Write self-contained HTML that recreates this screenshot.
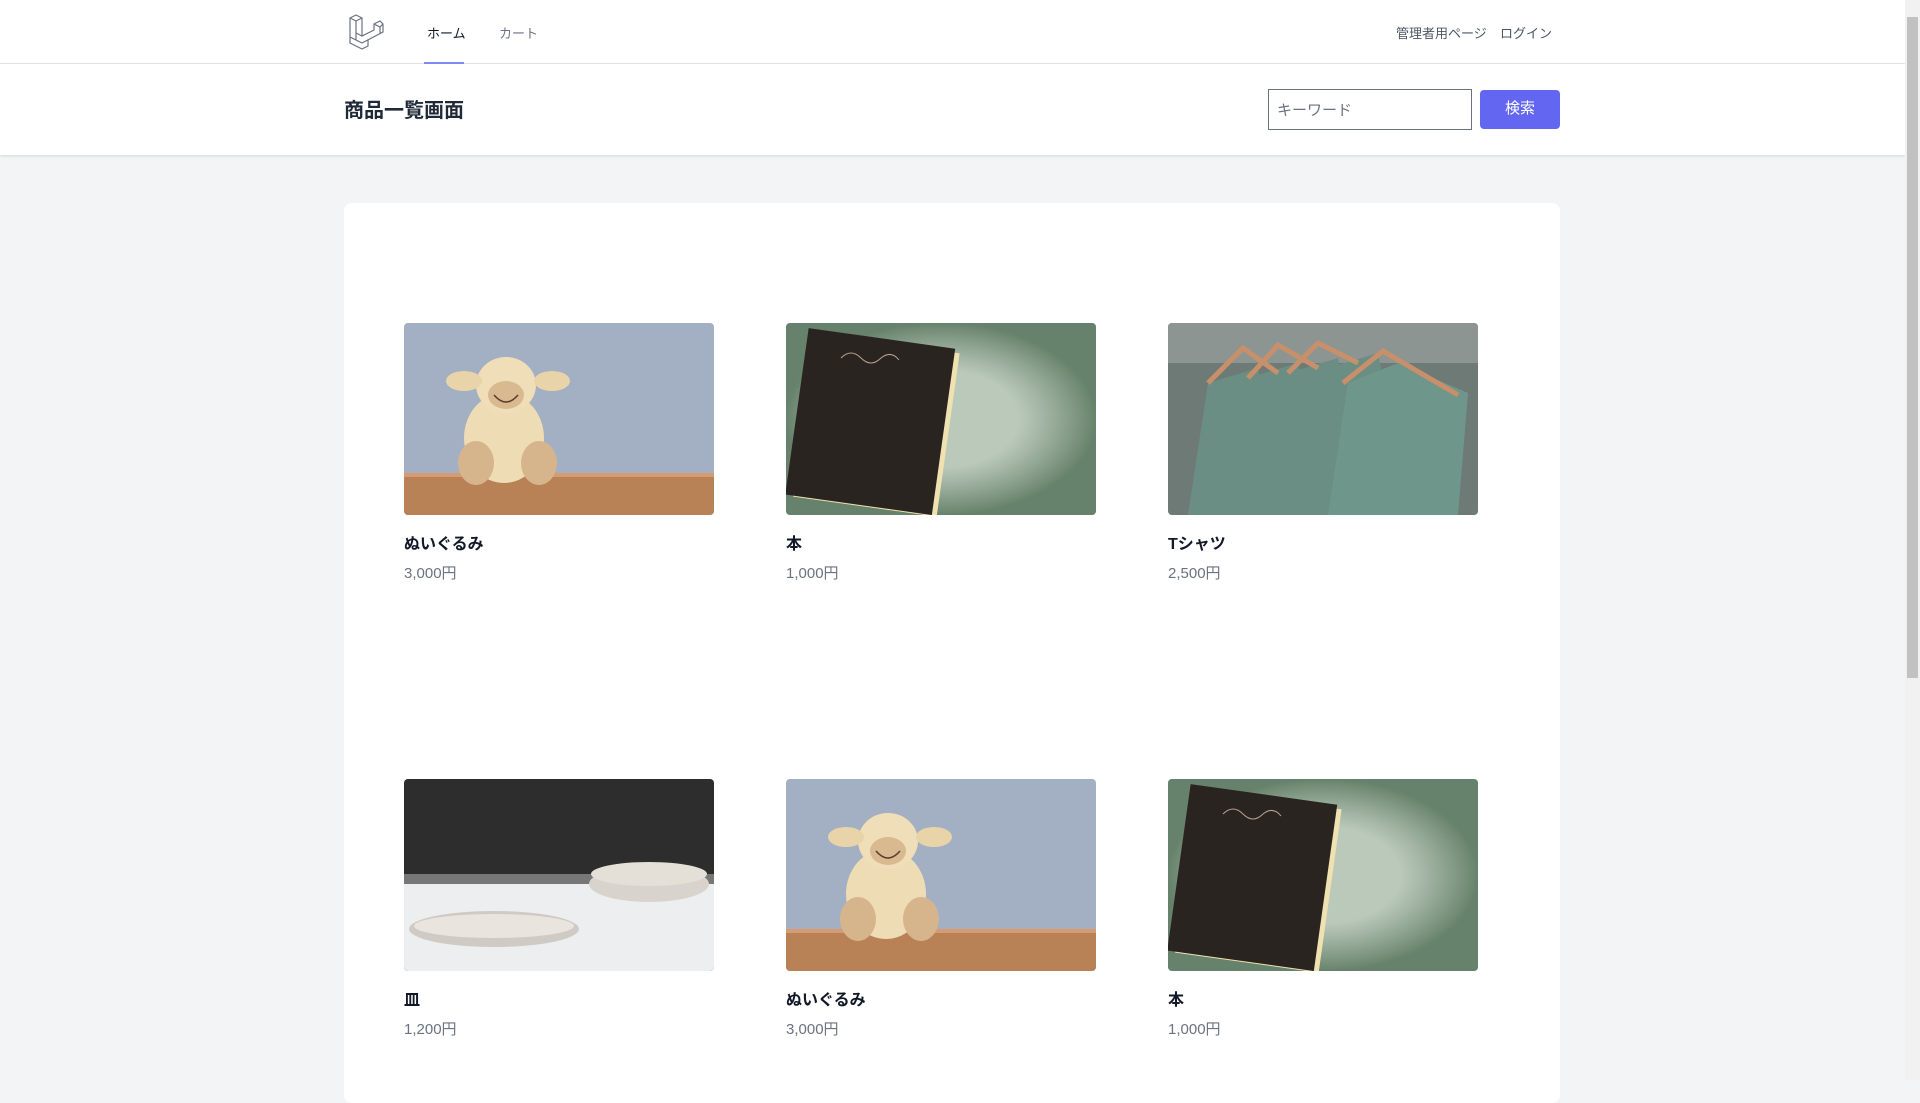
<!DOCTYPE html>
<html><head><meta charset="utf-8"><style>
*{box-sizing:border-box;margin:0;padding:0}
body{width:1920px;height:1080px;overflow:hidden;background:#f3f4f6;font-family:"Liberation Sans","Noto Sans CJK JP",sans-serif;color:#111827;position:relative}
.nav{position:absolute;left:0;top:0;width:1905px;height:64px;background:#fff;border-bottom:1px solid #e5e7eb}
.nav a{position:absolute;top:23px;font-size:13px;color:#6b7280;text-decoration:none}
.hdr{position:absolute;left:0;top:64px;width:1905px;height:91px;background:#fff;box-shadow:0 1px 3px rgba(0,0,0,.12)}
.hdr h2{position:absolute;left:344px;top:30px;font-size:20px;font-weight:600;color:#1f2937}
.inp{position:absolute;left:1268px;top:25px;width:204px;height:41px;border:1px solid #6b7280;font-size:15px;color:#6b7280;padding:9px 8px}
.btn{position:absolute;left:1480px;top:26px;width:80px;height:39px;background:#6366f1;border-radius:4px;color:#fff;font-size:15px;text-align:center;line-height:38px}
.card{position:absolute;left:344px;top:203px;width:1216px;height:900px;background:#fff;border-radius:8px}
.p{position:absolute;width:310px}
.p svg{display:block;width:310px;height:192px;border-radius:4px}
.p .n{margin-top:15px;font-size:16px;font-weight:600;color:#111827}
.p .pr{margin-top:8px;font-size:15px;color:#6b7280}
.sb{position:absolute;left:1905px;top:0;width:15px;height:1080px;background:#f1f1f1}
.sb div{position:absolute;left:2px;top:17px;width:11px;height:661px;background:#c1c1c1}
</style></head><body>
<svg width="0" height="0" style="position:absolute"><defs>
<g id="bear"><rect width="310" height="192" fill="#a3afc2"/><rect y="150" width="310" height="42" fill="#b98156"/><rect y="150" width="310" height="4" fill="#d49c70"/>
<ellipse cx="100" cy="115" rx="40" ry="45" fill="#eedcb4"/><ellipse cx="102" cy="62" rx="30" ry="28" fill="#efdeb8"/><ellipse cx="60" cy="58" rx="18" ry="10" fill="#e8d4a8"/><ellipse cx="148" cy="58" rx="18" ry="10" fill="#e8d4a8"/><ellipse cx="102" cy="72" rx="18" ry="14" fill="#d9b990"/><ellipse cx="72" cy="140" rx="18" ry="22" fill="#d7b58c"/><ellipse cx="135" cy="140" rx="18" ry="22" fill="#d7b58c"/><path d="M90 72 Q102 86 114 72" stroke="#5a3d2b" stroke-width="1.5" fill="none"/></g>
<g id="book"><rect width="310" height="192" fill="#9fb2a0"/><rect width="310" height="192" fill="url(#vg)"/><g transform="rotate(8 80 100)"><rect x="18" y="18" width="145" height="165" fill="#efe2b0"/><rect x="10" y="14" width="148" height="168" fill="#2a2421"/></g><path d="M55 35 q10 -10 20 0 q10 10 20 0 q10 -8 18 2" stroke="#b9a08a" fill="none"/></g>
<radialGradient id="vg"><stop offset=".5" stop-color="#cdd8cc" stop-opacity=".6"/><stop offset="1" stop-color="#4f6e55" stop-opacity=".7"/></radialGradient>
<g id="shirt"><rect width="310" height="192" fill="#6e7a76"/><rect width="310" height="40" fill="#8d9593"/><g fill="#6b8e84"><path d="M40 60 L90 45 L120 192 L20 192Z"/><path d="M80 55 L130 40 L160 192 L60 192Z"/><path d="M120 50 L170 35 L200 192 L100 192Z"/><path d="M160 45 L210 30 L240 192 L140 192Z"/><path d="M180 60 L230 40 L300 70 L290 192 L160 192Z" fill="#6f968b"/></g><g stroke="#c8906a" stroke-width="5" fill="none"><path d="M40 60 L75 25 L110 50"/><path d="M80 55 L110 22 L150 45"/><path d="M120 50 L150 20 L190 40"/><path d="M175 60 L215 28 L290 72"/></g></g>
<g id="plate"><rect width="310" height="192" fill="#2e2d2e"/><rect y="100" width="310" height="92" fill="#eceeef"/><rect y="95" width="310" height="10" fill="#777"/><ellipse cx="90" cy="150" rx="85" ry="18" fill="#cfcac3"/><ellipse cx="90" cy="147" rx="80" ry="12" fill="#e9e5de"/><ellipse cx="245" cy="105" rx="60" ry="18" fill="#d8d4cd"/><ellipse cx="245" cy="95" rx="58" ry="12" fill="#e4e0d8"/></g>
</defs></svg>
<div class="nav">
<svg style="position:absolute;left:348px;top:12px" width="36" height="38" viewBox="0 0 36 38" fill="none" stroke="#6b7280" stroke-width="1.2"><path d="M2 6 L8 3 L14 6 L14 24 L26 18 L26 12 L32 9 L35 12 L35 20 L14 31 L2 25 Z M2 6 L8 9 L14 6 M8 9 L8 28 M14 24 L8 21 M26 12 L32 15 L35 12 M32 15 L32 21 M20 28 L20 34 L14 37 L2 31 L2 25"/></svg>
<a style="left:427px;color:#111827">ホーム</a>
<div style="position:absolute;left:424px;top:62px;width:40px;height:2px;background:#818cf8"></div>
<a style="left:499px">カート</a>
<a style="left:1396px;color:#4b5563">管理者用ページ</a>
<a style="left:1500px;color:#4b5563">ログイン</a>
</div>
<div class="hdr"><h2>商品一覧画面</h2><div class="inp">キーワード</div><div class="btn">検索</div></div>
<div class="card">
<div class="p" style="left:60px;top:120px"><svg viewBox="0 0 310 192"><use href="#bear"/></svg><div class="n">ぬいぐるみ</div><div class="pr">3,000円</div></div>
<div class="p" style="left:442px;top:120px"><svg viewBox="0 0 310 192"><use href="#book"/></svg><div class="n">本</div><div class="pr">1,000円</div></div>
<div class="p" style="left:824px;top:120px"><svg viewBox="0 0 310 192"><use href="#shirt"/></svg><div class="n">Tシャツ</div><div class="pr">2,500円</div></div>
<div class="p" style="left:60px;top:576px"><svg viewBox="0 0 310 192"><use href="#plate"/></svg><div class="n">皿</div><div class="pr">1,200円</div></div>
<div class="p" style="left:442px;top:576px"><svg viewBox="0 0 310 192"><use href="#bear"/></svg><div class="n">ぬいぐるみ</div><div class="pr">3,000円</div></div>
<div class="p" style="left:824px;top:576px"><svg viewBox="0 0 310 192"><use href="#book"/></svg><div class="n">本</div><div class="pr">1,000円</div></div>
</div>
<div class="sb"><div></div></div>
</body></html>
